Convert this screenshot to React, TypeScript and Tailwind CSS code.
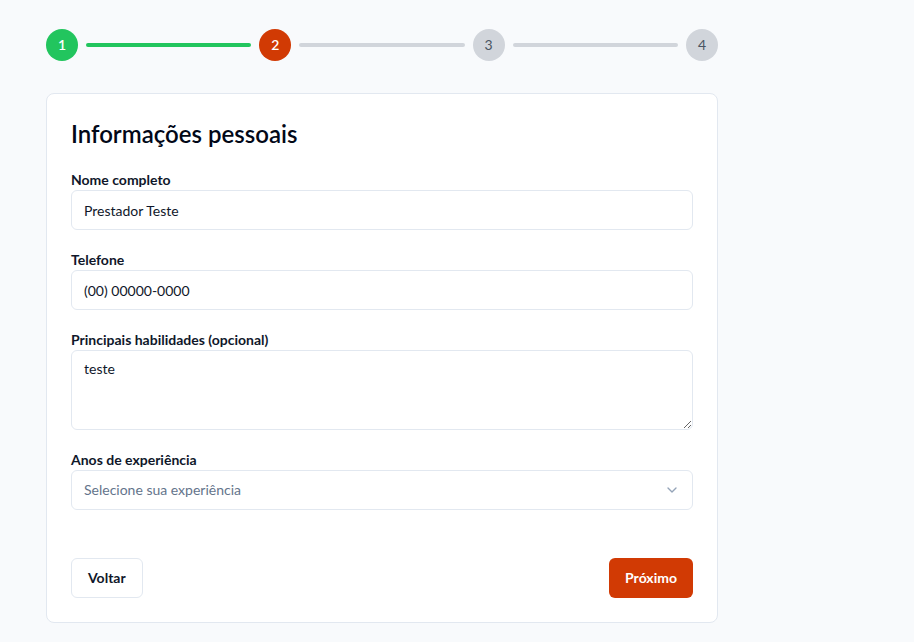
import React, { useState } from 'react';
import { ChevronDown } from 'lucide-react';

const STEPS = [1, 2, 3, 4];
const CURRENT = 2;

const Stepper: React.FC = () => (
    <div className="flex items-center">
        {STEPS.map((step, i) => (
            <React.Fragment key={step}>
                <div
                    className={`w-8 h-8 rounded-full flex items-center justify-center text-sm shrink-0 ${step < CURRENT
                        ? 'bg-[#22c55e] text-white font-semibold'
                        : step === CURRENT
                            ? 'bg-[#d13a04] text-white font-semibold'
                            : 'bg-[#d1d5db] text-[#4b5563]'
                        }`}
                >
                    {step}
                </div>
                {i < STEPS.length - 1 && (
                    <div
                        className={`flex-1 h-1 mx-2 rounded-full ${step < CURRENT ? 'bg-[#22c55e]' : 'bg-[#d1d5db]'}`}
                    />
                )}
            </React.Fragment>
        ))}
    </div>
);

const fieldClass =
    'w-full h-10 px-3 rounded-md border border-[#e2e8f0] bg-white text-sm text-[#0f172a] outline-none';

export default function App() {
    const [nome, setNome] = useState('Prestador Teste');
    const [telefone, setTelefone] = useState('(00) 00000-0000');
    const [habilidades, setHabilidades] = useState('teste');

    return (
        <div
            className="min-h-screen bg-[#f8fafc] px-[46px] pt-[29px] pb-5"
            style={{ fontFamily: 'Lato, "Noto Sans", sans-serif' }}
        >
            <div className="w-[672px]">
                <Stepper />

                {/* Cartão do formulário */}
                <div className="mt-8 bg-white border border-[#e2e8f0] rounded-lg p-6">
                    <h2 className="text-2xl font-semibold text-[#020817] leading-8 mb-5">Informações pessoais</h2>

                    <div className="space-y-5">
                        <div>
                            <label className="block text-sm font-bold text-[#0f172a] leading-5">Nome completo</label>
                            <input className={fieldClass} value={nome} onChange={(e) => setNome(e.target.value)} />
                        </div>

                        <div>
                            <label className="block text-sm font-bold text-[#0f172a] leading-5">Telefone</label>
                            <input className={fieldClass} value={telefone} onChange={(e) => setTelefone(e.target.value)} />
                        </div>

                        <div>
                            <label className="block text-sm font-bold text-[#0f172a] leading-5">
                                Principais habilidades (opcional)
                            </label>
                            <textarea
                                className="block w-full h-20 px-3 py-2 rounded-md border border-[#e2e8f0] bg-white text-sm text-[#0f172a] outline-none"
                                value={habilidades}
                                onChange={(e) => setHabilidades(e.target.value)}
                            />
                        </div>

                        <div>
                            <label className="block text-sm font-bold text-[#0f172a] leading-5">Anos de experiência</label>
                            <button
                                type="button"
                                className="w-full h-10 px-3 rounded-md border border-[#e2e8f0] bg-white flex items-center justify-between text-sm text-[#64748b]"
                            >
                                <span>Selecione sua experiência</span>
                                <ChevronDown className="w-4 h-4 text-[#94a3b8]" />
                            </button>
                        </div>
                    </div>

                    <div className="flex justify-between mt-12">
                        <button
                            type="button"
                            className="h-10 px-4 rounded-md border border-[#e2e8f0] bg-white text-sm font-bold text-[#0f172a]"
                        >
                            Voltar
                        </button>
                        <button
                            type="button"
                            className="h-10 px-4 rounded-md bg-[#d13a04] text-sm font-bold text-white"
                        >
                            Próximo
                        </button>
                    </div>
                </div>
            </div>
        </div>
    );
}
